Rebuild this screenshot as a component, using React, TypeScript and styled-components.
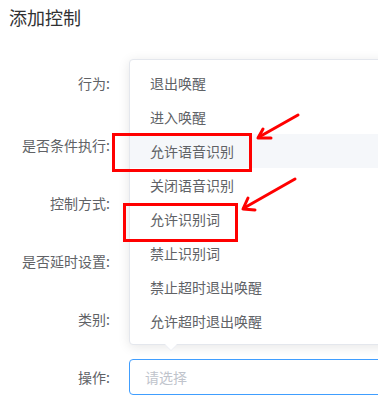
import React from "react";
import styled, { createGlobalStyle } from "styled-components";

const GlobalStyle = createGlobalStyle`
  html, body { margin: 0; padding: 0; background: #fff; }
  body { font-family: "Noto Sans CJK SC", "Noto Sans", sans-serif; }
  * { box-sizing: border-box; }
`;

const Page = styled.div`
  position: relative;
  width: 378px;
  height: 407px;
  overflow: hidden;
  background: #fff;
`;

const Title = styled.div`
  margin: 4px 0 0 9px;
  font-size: 18px;
  line-height: 26px;
  color: #303133;
`;

const Form = styled.div`
  display: flex;
  flex-direction: column;
  margin-top: 35px;
`;

const Row = styled.div<{ $gap: number }>`
  display: grid;
  grid-template-columns: 122px 1fr;
  column-gap: 7px;
  align-items: center;
  height: 36px;
  margin-bottom: ${(p) => p.$gap}px;
`;

const Label = styled.label`
  text-align: right;
  padding-right: 12px;
  font-size: 14px;
  color: #606266;
  white-space: nowrap;
`;

const SelectBox = styled.div<{ $focused?: boolean }>`
  height: 36px;
  width: 300px;
  border: 1px solid ${(p) => (p.$focused ? "#409eff" : "#dcdfe6")};
  border-radius: 4px;
  padding: 0 15px;
  display: flex;
  align-items: center;
  font-size: 14px;
  color: #c0c4cc;
  background: #fff;
`;

const Dropdown = styled.div`
  position: absolute;
  left: 129px;
  top: 59px;
  width: 300px;
  background: #fff;
  border: 1px solid #e4e7ed;
  border-radius: 4px;
  box-shadow: 0 2px 12px 0 rgba(0, 0, 0, 0.1);
  padding: 6px 0;
`;

const Option = styled.div<{ $hover?: boolean }>`
  height: 34px;
  line-height: 34px;
  padding: 0 20px;
  font-size: 14px;
  color: #606266;
  white-space: nowrap;
  background: ${(p) => (p.$hover ? "#f5f7fa" : "#fff")};
`;

const PopArrow = styled.div`
  position: absolute;
  left: 35px;
  bottom: -7px;
  width: 0;
  height: 0;
  border-left: 6px solid transparent;
  border-right: 6px solid transparent;
  border-top: 6px solid #ebeef5;
  &::after {
    content: "";
    position: absolute;
    left: -6px;
    top: -7px;
    border-left: 6px solid transparent;
    border-right: 6px solid transparent;
    border-top: 6px solid #fff;
  }
`;

const Mark = styled.div<{ $x: number; $y: number; $w: number; $h: number }>`
  position: absolute;
  left: ${(p) => p.$x}px;
  top: ${(p) => p.$y}px;
  width: ${(p) => p.$w}px;
  height: ${(p) => p.$h}px;
  border: 3px solid #ff0000;
`;

const ArrowLayer = styled.svg`
  position: absolute;
  left: 0;
  top: 0;
  pointer-events: none;
`;

const rows = [
  { label: "行为:", gap: 26 },
  { label: "是否条件执行:", gap: 22 },
  { label: "控制方式:", gap: 22 },
  { label: "是否延时设置:", gap: 22 },
  { label: "类别:", gap: 22 },
  { label: "操作:", gap: 0, focused: true },
];

const options = [
  "退出唤醒",
  "进入唤醒",
  "允许语音识别",
  "关闭语音识别",
  "允许识别词",
  "禁止识别词",
  "禁止超时退出唤醒",
  "允许超时退出唤醒",
];

export default function App() {
  return (
    <Page>
      <GlobalStyle />
      <Title>添加控制</Title>
      <Form>
        {rows.map((r) => (
          <Row key={r.label} $gap={r.gap}>
            <Label>{r.label}</Label>
            <SelectBox $focused={r.focused}>{r.focused ? "请选择" : null}</SelectBox>
          </Row>
        ))}
      </Form>
      <Dropdown>
        {options.map((o, i) => (
          <Option key={o} $hover={i === 2}>
            {o}
          </Option>
        ))}
        <PopArrow />
      </Dropdown>
      <Mark $x={112} $y={133} $w={140} $h={39} />
      <Mark $x={123} $y={203} $w={115} $h={39} />
      <ArrowLayer width="378" height="407" viewBox="0 0 378 407">
        <g stroke="#ff0000" strokeWidth="3" fill="none" strokeLinecap="round" strokeLinejoin="round">
          <path d="M298 115 L259 137" />
          <path d="M263 129 L258 138 L271 138" />
          <path d="M295 179 L244 208" />
          <path d="M248 198 L243 209 L255 210" />
        </g>
      </ArrowLayer>
    </Page>
  );
}
